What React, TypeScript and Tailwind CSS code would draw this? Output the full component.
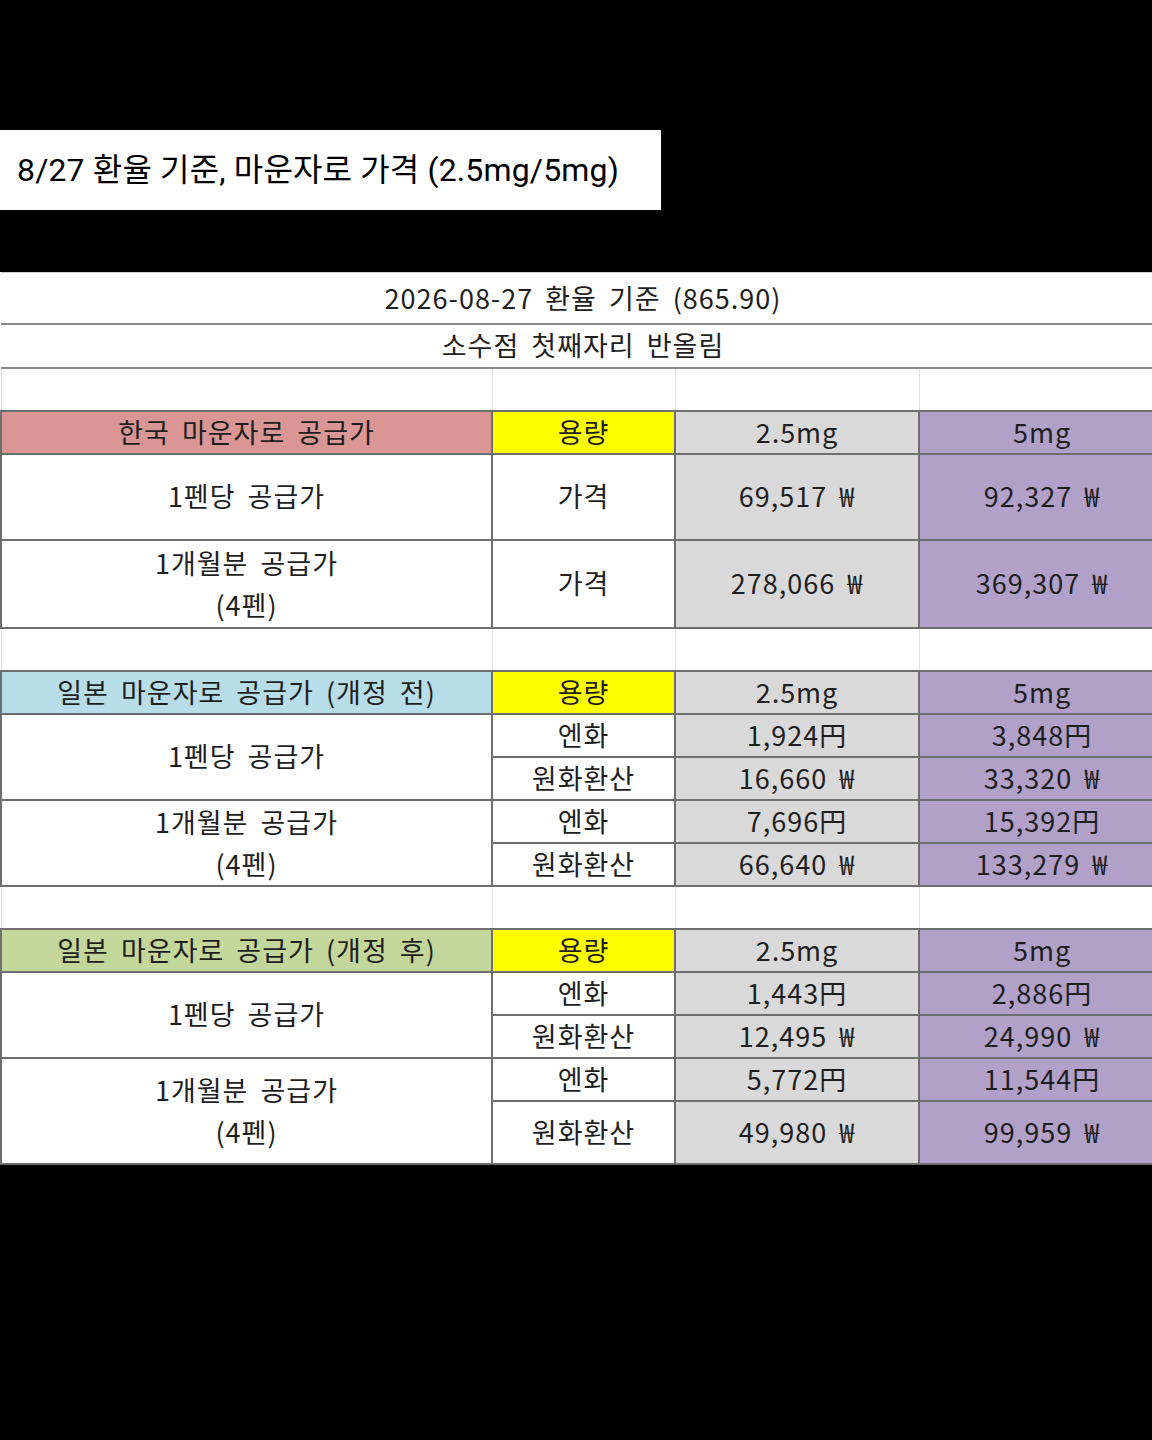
import React from "react";

const font = {
  fontFamily: '"Noto Sans CJK KR", "Noto Sans", sans-serif',
  letterSpacing: "1px",
  wordSpacing: "5px",
};

type Sub = { unit: string; a: string; b: string };
type Group = { label: React.ReactNode; subs: Sub[]; tall?: boolean };

const Header = ({ title, color }: { title: string; color: string }) => (
  <tr className="h-[43px]">
    <td className={`border-2 border-[#6e6e6e] text-center ${color}`}>{title}</td>
    <td className="border-2 border-[#6e6e6e] bg-[#ffff00] text-center">용량</td>
    <td className="border-2 border-[#6e6e6e] bg-[#d9d9d9] text-center">2.5mg</td>
    <td className="border-2 border-[#6e6e6e] bg-[#b1a0c7] text-center">5mg</td>
  </tr>
);

const Blank = () => (
  <tr className="h-[43px]">
    <td className="border-x border-[#e3e3e3]" />
    <td className="border-x border-[#e3e3e3]" />
    <td className="border-x border-[#e3e3e3]" />
    <td className="border-x border-[#e3e3e3]" />
  </tr>
);

const MonthLabel = () => (
  <div className="leading-[42px]">
    1개월분 공급가
    <br />
    (4펜)
  </div>
);

const JapanRows = ({ groups }: { groups: Group[] }) => (
  <>
    {groups.map((g, gi) =>
      g.subs.map((s, si) => (
        <tr key={`${gi}-${si}`} className={si === 1 && g.tall ? "h-[63px]" : "h-[43px]"}>
          {si === 0 && (
            <td rowSpan={2} className="border-2 border-[#6e6e6e] bg-white text-center">
              {g.label}
            </td>
          )}
          <td className="border-2 border-[#6e6e6e] bg-white text-center">{s.unit}</td>
          <td className="border-2 border-[#6e6e6e] bg-[#d9d9d9] text-center">{s.a}</td>
          <td className="border-2 border-[#6e6e6e] bg-[#b1a0c7] text-center">{s.b}</td>
        </tr>
      ))
    )}
  </>
);

const before: Group[] = [
  {
    label: "1펜당 공급가",
    subs: [
      { unit: "엔화", a: "1,924円", b: "3,848円" },
      { unit: "원화환산", a: "16,660 ₩", b: "33,320 ₩" },
    ],
  },
  {
    label: <MonthLabel />,
    subs: [
      { unit: "엔화", a: "7,696円", b: "15,392円" },
      { unit: "원화환산", a: "66,640 ₩", b: "133,279 ₩" },
    ],
  },
];

const after: Group[] = [
  {
    label: "1펜당 공급가",
    subs: [
      { unit: "엔화", a: "1,443円", b: "2,886円" },
      { unit: "원화환산", a: "12,495 ₩", b: "24,990 ₩" },
    ],
  },
  {
    label: <MonthLabel />,
    tall: true,
    subs: [
      { unit: "엔화", a: "5,772円", b: "11,544円" },
      { unit: "원화환산", a: "49,980 ₩", b: "99,959 ₩" },
    ],
  },
];

export default function App() {
  return (
    <div className="w-[1152px] h-[1440px] bg-black overflow-hidden">
      <div className="pt-[130px]">
        <div
          className="w-[661px] h-[80px] bg-white flex items-center pl-[17px] text-[32px] tracking-[0.15px] text-black"
          style={{ fontFamily: 'Roboto, "Noto Sans CJK KR", sans-serif' }}
        >
          8/27 환율 기준, 마운자로 가격 (2.5mg/5mg)
        </div>
      </div>

      <div className="mt-[62px] w-[1152px] overflow-hidden">
        <table
          className="w-[1164px] table-fixed border-collapse bg-white text-[27px] text-[#1e1e1e]"
          style={font}
        >
          <colgroup>
            <col className="w-[491px]" />
            <col className="w-[183px]" />
            <col className="w-[244px]" />
            <col className="w-[246px]" />
          </colgroup>
          <tbody>
            <tr className="h-[51px]">
              <td colSpan={4} className="border-t border-[#d0d0d0] border-b-2 border-b-[#8a8a8a] text-center">
                2026-08-27 환율 기준 (865.90)
              </td>
            </tr>
            <tr className="h-[44px]">
              <td colSpan={4} className="border-b-2 border-[#8a8a8a] text-center">
                소수점 첫째자리 반올림
              </td>
            </tr>
            <Blank />

            <Header title="한국 마운자로 공급가" color="bg-[#da9694]" />
            <tr className="h-[86px]">
              <td className="border-2 border-[#6e6e6e] bg-white text-center">1펜당 공급가</td>
              <td className="border-2 border-[#6e6e6e] bg-white text-center">가격</td>
              <td className="border-2 border-[#6e6e6e] bg-[#d9d9d9] text-center">69,517 ₩</td>
              <td className="border-2 border-[#6e6e6e] bg-[#b1a0c7] text-center">92,327 ₩</td>
            </tr>
            <tr className="h-[88px]">
              <td className="border-2 border-[#6e6e6e] bg-white text-center">
                <MonthLabel />
              </td>
              <td className="border-2 border-[#6e6e6e] bg-white text-center">가격</td>
              <td className="border-2 border-[#6e6e6e] bg-[#d9d9d9] text-center">278,066 ₩</td>
              <td className="border-2 border-[#6e6e6e] bg-[#b1a0c7] text-center">369,307 ₩</td>
            </tr>
            <Blank />

            <Header title="일본 마운자로 공급가 (개정 전)" color="bg-[#b7dee8]" />
            <JapanRows groups={before} />
            <Blank />

            <Header title="일본 마운자로 공급가 (개정 후)" color="bg-[#c4d79b]" />
            <JapanRows groups={after} />
          </tbody>
        </table>
      </div>
    </div>
  );
}
